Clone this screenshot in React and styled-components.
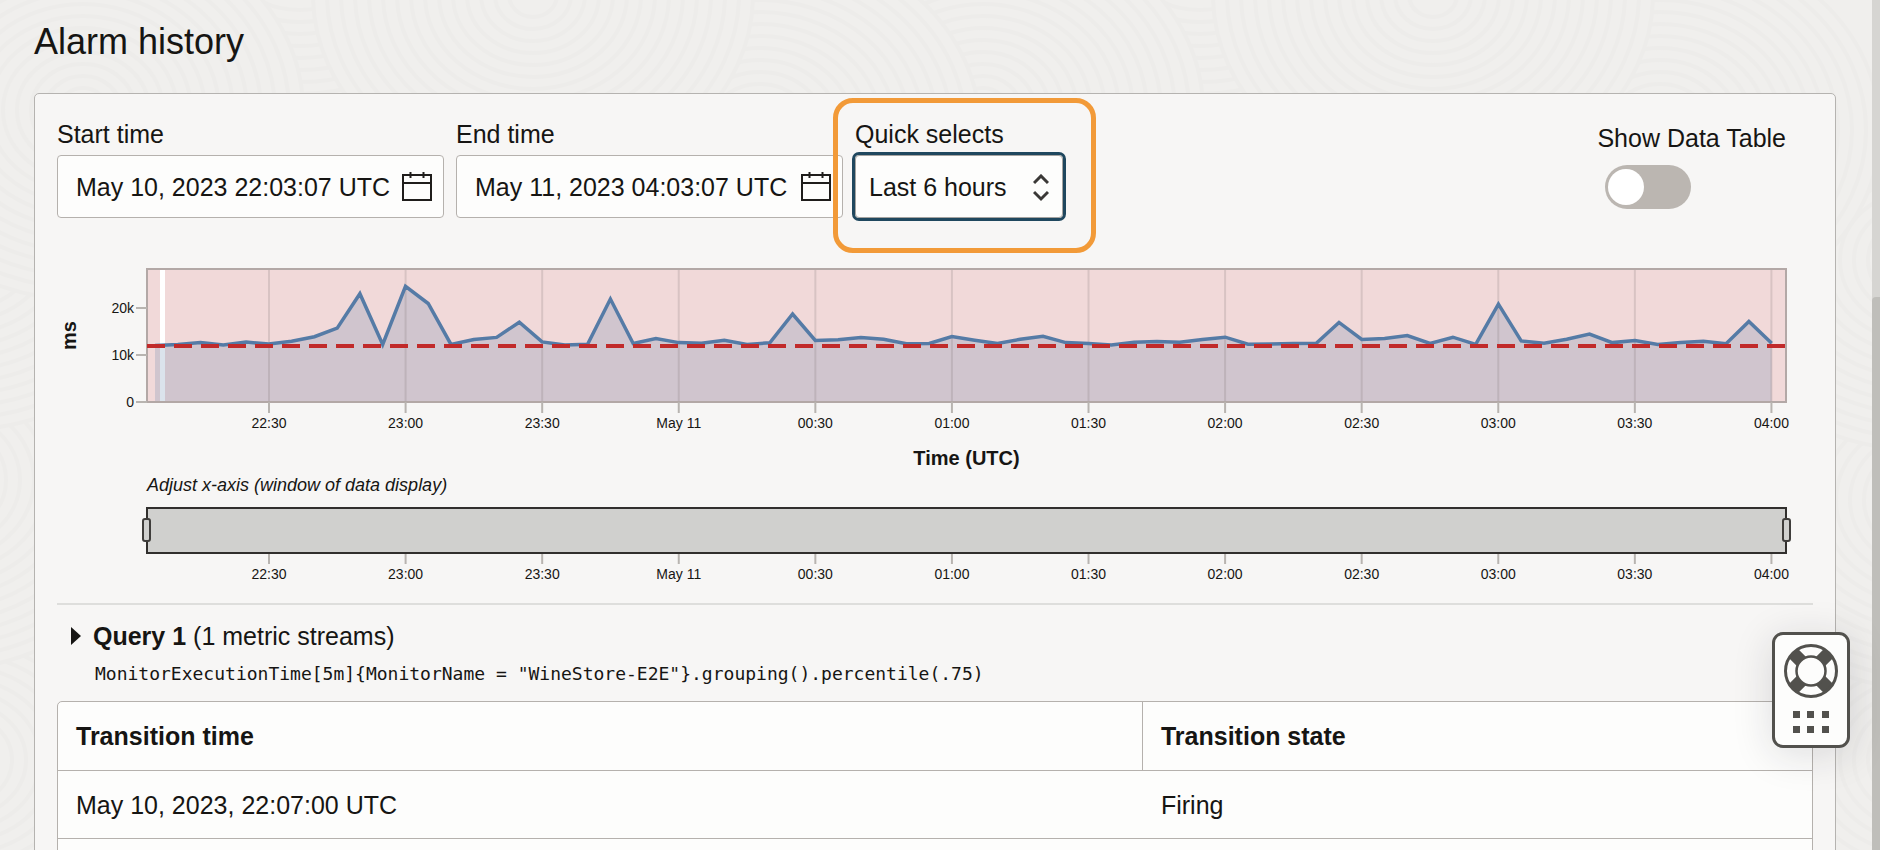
import React, { useState } from "react";
import styled, { createGlobalStyle } from "styled-components";

const GlobalStyle = createGlobalStyle`
  *, *::before, *::after { box-sizing: border-box; }
  html, body { margin: 0; height: 100%; overflow: hidden; }
  body {
    background: #f0efed;
    color: #161513;
    font-family: "Liberation Sans", Arial, Helvetica, sans-serif;
    font-size: 25px;
    line-height: 28px;
  }
  #root { height: 100%; }
  input, select, button { font: inherit; color: inherit; }
`;

const Page = styled.div`
  position: relative;
  display: flex;
  height: 100%;
  overflow: hidden;
`;

const Texture = styled.svg`
  position: absolute;
  inset: 0;
  width: 100%;
  height: 100%;
`;

const Content = styled.main`
  position: relative;
  flex: 1;
  min-width: 0;
  padding: 21px 36px 0 34px;
`;

const ScrollTrack = styled.div`
  position: relative;
  width: 8px;
  padding-top: 297px;
  background: #d6d5d2;
`;

const ScrollThumb = styled.div`
  height: 100%;
  border-radius: 4px 0 0 0;
  background: #bfbeba;
`;

const Title = styled.h1`
  margin: 0 0 30px;
  font-size: 36px;
  font-weight: 400;
  line-height: 42px;
`;

const Card = styled.section`
  padding: 26px 22px 0;
  border: 1px solid #b5b3b0;
  border-radius: 5px;
  background: #f7f6f5;
`;

const Toolbar = styled.div`
  display: flex;
  align-items: flex-start;
  gap: 12px;
  height: 149px;
`;

const Field = styled.div`
  position: relative;
  display: flex;
  flex-direction: column;
  gap: 7px;
  width: ${(p) => p.$width}px;
`;

const Label = styled.label`
  white-space: nowrap;
`;

const DateBox = styled.div`
  display: flex;
  align-items: center;
  height: 63px;
  padding: 0 11px 0 18px;
  border: 1px solid #b5b1ad;
  border-radius: 4px;
  background: #fdfdfc;
`;

const DateInput = styled.input`
  flex: 1;
  min-width: 0;
  height: 34px;
  padding: 2px 0 0;
  border: 0;
  background: transparent;
  outline: 0;
`;

const IconButton = styled.button`
  display: flex;
  margin-left: 12px;
  padding: 0;
  border: 0;
  background: none;
`;

const SelectBox = styled.div`
  position: relative;
`;

const Select = styled.select`
  display: block;
  width: 100%;
  height: 63px;
  padding: 0 40px 0 13px;
  appearance: none;
  border: 1px solid #a5a3a0;
  border-radius: 4px;
  outline: 3px solid #1f475e;
  background: #fdfdfc;
`;

const SelectArrows = styled.svg`
  position: absolute;
  top: 19px;
  right: 14px;
  pointer-events: none;
`;

const Highlight = styled.div`
  position: absolute;
  top: -22px;
  left: -22px;
  width: 263px;
  height: 155px;
  border: 5px solid #f29a38;
  border-radius: 20px;
  pointer-events: none;
`;

const ToggleField = styled.div`
  display: flex;
  flex-direction: column;
  gap: 13px;
  margin: 4px 27px 0 auto;
`;

const Toggle = styled.input`
  appearance: none;
  width: 86px;
  height: 44px;
  margin: 0 0 0 8px;
  padding: 4px 3px;
  border-radius: 22px;
  background: #bbb6b1;
  &::before {
    content: "";
    display: block;
    width: 36px;
    height: 36px;
    border-radius: 50%;
    background: #fff;
  }
  &:checked::before { margin-left: 44px; }
`;

const ChartRow = styled.div`
  display: flex;
  padding-right: 27px;
`;

const AxisSide = styled.div`
  display: flex;
  align-items: flex-start;
  width: 90px;
  height: 133px;
`;

const AxisTitle = styled.div`
  font-size: 20px;
  font-weight: 700;
  line-height: 24px;
  text-align: center;
  white-space: nowrap;
`;

const VerticalTitle = styled(AxisTitle)`
  width: 24px;
  height: 133px;
  writing-mode: vertical-rl;
  transform: rotate(180deg);
`;

const ChartBody = styled.div`
  flex: 1;
  min-width: 0;
`;

const Plot = styled.svg`
  display: block;
  width: 100%;
  height: ${(p) => p.$height}px;
  overflow: visible;
  font-size: 14px;
`;

const BrushCaption = styled.div`
  padding: 5px 0 12px;
  font-size: 18px;
  font-style: italic;
  line-height: 20px;
`;

const Brush = styled.div`
  position: relative;
  height: 47px;
  margin: 0 -1px;
  border: 2px solid #312f2d;
  background: #d0d0ce;
`;

const BrushHandle = styled.input`
  position: absolute;
  left: -6px;
  top: 9px;
  width: calc(100% + 12px);
  height: 24px;
  margin: 0;
  appearance: none;
  background: transparent;
  pointer-events: none;
  &::-webkit-slider-thumb {
    width: 9px;
    height: 24px;
    appearance: none;
    border: 2px solid #3f3d3b;
    border-radius: 3px;
    background: #d0d0ce;
    pointer-events: auto;
  }
`;

const Divider = styled.hr`
  height: 2px;
  margin: 16px 0 21px;
  border: 0;
  background: #dededc;
`;

const QueryHeader = styled.button`
  display: flex;
  align-items: center;
  gap: 12px;
  height: 20px;
  padding: 0 0 0 14px;
  border: 0;
  background: none;
  line-height: 20px;
`;

const QueryCode = styled.code`
  display: block;
  margin: 16px 0 15px 38px;
  font-family: "DejaVu Sans Mono", "Liberation Mono", monospace;
  font-size: 18px;
  line-height: 24px;
`;

const Table = styled.table`
  width: 100%;
  table-layout: fixed;
  border: 1px solid #b5b1ad;
  border-radius: 5px 5px 0 0;
  border-spacing: 0;
  background: #fdfdfc;
`;

const HeadCell = styled.th`
  width: ${(p) => p.$width};
  height: 69px;
  padding: 0 18px;
  border-bottom: 1px solid #b5b1ad;
  text-align: left;
  & + & { border-left: 1px solid #b5b1ad; }
`;

const Cell = styled.td`
  height: 68px;
  padding: 0 18px;
  border-bottom: 1px solid #b5b1ad;
  & + & { padding-left: 19px; }
`;

const HelpWidget = styled.button`
  position: absolute;
  top: 632px;
  right: 30px;
  display: flex;
  flex-direction: column;
  align-items: center;
  gap: 13px;
  width: 78px;
  height: 116px;
  padding: 9px 0 0;
  border: 3px solid #52514d;
  border-radius: 11px;
  background: #fdfdfc;
  box-shadow: 0 6px 40px rgba(30, 25, 40, 0.14);
`;

const times = ["22:30", "23:00", "23:30", "May 11", "00:30", "01:00", "01:30", "02:00", "02:30", "03:00", "03:30", "04:00"];

/* The window holds 360 minutes, from 22:03 to 04:03. */
const tickX = (i) => ((26.8 + i * 30) / 360) * 100 + "%";

/* Execution time in ms, one value for each five minutes from 22:05. */
const series = [
  12100, 12300, 12700, 12200, 12800, 12400, 13000, 13950, 15800, 23150, 12300,
  24700, 21050, 12300, 13350, 13800, 17050, 12850, 12200, 12350, 22000, 12500, 13550,
  12700, 12550, 13200, 12300, 12650, 18800, 13150, 13300, 13800, 13400, 12450, 12500,
  14000, 13200, 12500, 13400, 14050, 12700, 12500, 12150, 12750, 12900, 12750, 13350,
  13850, 12350, 12400, 12500, 12550, 17000, 13350, 13550, 14200, 12500, 13850, 12300,
  20900, 13050, 12550, 13400, 14500, 12700, 13150, 12300, 12700, 13000, 12450, 17200, 12550,
];

const points = series.map((v, i) => [8 + i * 22.77, 133 - (v / 10000) * 46.8]);
const line = points.map(([x, y]) => x.toFixed(1) + "," + y.toFixed(1)).join(" ");
const area = `${points[0][0]},133 ${line} ${points[points.length - 1][0]},133`;

function TimeAxis({ top }) {
  return times.map((t, i) => (
    <g key={t}>
      <line x1={tickX(i)} x2={tickX(i)} y1={top} y2={top + 11} stroke="#b8b4b0" strokeWidth="2" />
      <text x={tickX(i)} y={top + 26} textAnchor="middle" fill="#161513">{t}</text>
    </g>
  ));
}

function AlarmChart() {
  return (
    <Plot $height={177} role="img" aria-label="Monitor execution time">
      <rect width="100%" height="133" fill="#f1d9d9" />
      <svg width="100%" height="133" viewBox="0 0 1639 133" preserveAspectRatio="none">
        <rect x="13" width="5" height="133" fill="#fff" />
        <polygon points={area} fill="#567ba5" fillOpacity="0.21" />
      </svg>
      {times.map((t, i) => (
        <line key={t} x1={tickX(i)} x2={tickX(i)} y1="0" y2="133" stroke="#7a6e70" strokeOpacity="0.2" strokeWidth="2" />
      ))}
      <rect width="100%" height="133" fill="none" stroke="#b3a8a6" strokeWidth="2" />
      <svg width="100%" height="133" viewBox="0 0 1639 133" preserveAspectRatio="none">
        <polyline points={line} fill="none" stroke="#557ba6" strokeWidth="3.500" vectorEffect="non-scaling-stroke" />
      </svg>
      <line x1="0" x2="100%" y1="77" y2="77" stroke="#c12a2a" strokeWidth="4" strokeDasharray="18 9" />
      {[["20k", 39], ["10k", 86], ["0", 133]].map(([t, y]) => (
        <g key={t}>
          <line x1="-11" x2="0" y1={y} y2={y} stroke="#b8b4b0" strokeWidth="2" />
          <text x="-13" y={y + 5} textAnchor="end" fill="#161513">{t}</text>
        </g>
      ))}
      <TimeAxis top={133} />
    </Plot>
  );
}

function CalendarIcon() {
  return (
    <svg width="30" height="30" viewBox="0 0 30 30" fill="none" stroke="#1f1d1b" strokeWidth="2">
      <path d="M1 3h28v25H1zM1 11h28M8.500 0v6M21.500 0v6" />
    </svg>
  );
}

function LifeRing() {
  return (
    <svg width="54" height="54" viewBox="0 0 54 54" fill="none" stroke="#52514d">
      <g strokeWidth="13">
        <path d="M9.500 9.500L19 19M44.500 9.500L35 19M9.500 44.500L19 35M44.500 44.500L35 35" />
      </g>
      <circle cx="27" cy="27" r="25.500" strokeWidth="3" />
      <circle cx="27" cy="27" r="14.500" strokeWidth="2.500" fill="#fdfdfc" />
    </svg>
  );
}

function DotGrid() {
  return (
    <svg width="36" height="22" viewBox="0 0 36 22" fill="#52514d">
      {[0, 15].map((y) => [0, 14, 29].map((x) => <rect key={x + "-" + y} x={x} y={y} width="7" height="7" />))}
    </svg>
  );
}

const rings = [
  [300, -60], [1200, -60], [-40, 760], [-60, 480], [-40, 240], [1920, 760], [1930, 500], [1920, 260],
  [83, 110], [983, 110], [760, 130], [1660, 130], [533, -5], [1433, -5],
];

function Background() {
  return (
    <Texture aria-hidden="true" fill="#f0efed" stroke="#edecea" strokeWidth="4">
      {rings.map(([cx, cy]) => (
        <g key={cx + "-" + cy}>
          {Array.from({ length: 15 }, (_, i) => (
            <ellipse key={i} cx={cx} cy={cy} rx={220 - i * 14} ry={190 - i * 12} />
          ))}
        </g>
      ))}
    </Texture>
  );
}

function DateField({ id, label, value }) {
  return (
    <Field $width={387}>
      <Label htmlFor={id}>{label}</Label>
      <DateBox>
        <DateInput id={id} type="text" defaultValue={value} />
        <IconButton type="button" aria-label={"Choose " + label.toLowerCase()}>
          <CalendarIcon />
        </IconButton>
      </DateBox>
    </Field>
  );
}

export default function App() {
  const [showTable, setShowTable] = useState(false);
  return (
    <Page>
      <GlobalStyle />
      <Background />
      <Content>
        <Title>Alarm history</Title>
        <Card>
          <Toolbar>
            <DateField id="start" label="Start time" value="May 10, 2023 22:03:07 UTC" />
            <DateField id="end" label="End time" value="May 11, 2023 04:03:07 UTC" />
            <Field $width={208}>
              <Label htmlFor="quick">Quick selects</Label>
              <SelectBox>
                <Select id="quick" defaultValue="6h">
                  <option value="6h">Last 6 hours</option>
                </Select>
                <SelectArrows width="16" height="28" viewBox="0 0 16 28" fill="none" stroke="#3a3836" strokeWidth="3">
                  <path d="M1 9l7-7 7 7M1 18l7 7 7-7" />
                </SelectArrows>
              </SelectBox>
              <Highlight />
            </Field>
            <ToggleField>
              <Label htmlFor="show-table">Show Data Table</Label>
              <Toggle
                id="show-table"
                type="checkbox"
                role="switch"
                checked={showTable}
                onChange={(e) => setShowTable(e.target.checked)}
              />
            </ToggleField>
          </Toolbar>

          <ChartRow>
            <AxisSide>
              <VerticalTitle>ms</VerticalTitle>
            </AxisSide>
            <ChartBody>
              <AlarmChart />
              <AxisTitle>Time (UTC)</AxisTitle>
              <BrushCaption>Adjust x-axis (window of data display)</BrushCaption>
              <Brush>
                <BrushHandle type="range" min="0" max="360" defaultValue="0" aria-label="Window start" />
                <BrushHandle type="range" min="0" max="360" defaultValue="360" aria-label="Window end" />
              </Brush>
              <Plot $height={33} role="img" aria-label="Window time axis">
                <TimeAxis top={-1} />
              </Plot>
            </ChartBody>
          </ChartRow>

          <Divider />
          <QueryHeader type="button" aria-expanded="false">
            <svg width="10" height="18" viewBox="0 0 10 18" fill="#161513">
              <path d="M0 0l10 9-10 9z" />
            </svg>
            <span><b>Query 1</b> (1 metric streams)</span>
          </QueryHeader>
          <QueryCode>{'MonitorExecutionTime[5m]{MonitorName = "WineStore-E2E"}.grouping().percentile(.75)'}</QueryCode>

          <Table>
            <thead>
              <tr>
                <HeadCell $width="61.8%">Transition time</HeadCell>
                <HeadCell>Transition state</HeadCell>
              </tr>
            </thead>
            <tbody>
              <tr>
                <Cell>May 10, 2023, 22:07:00 UTC</Cell>
                <Cell>Firing</Cell>
              </tr>
              <tr>
                <Cell />
                <Cell />
              </tr>
            </tbody>
          </Table>
        </Card>
      </Content>
      <ScrollTrack>
        <ScrollThumb />
      </ScrollTrack>
      <HelpWidget type="button" aria-label="Help">
        <LifeRing />
        <DotGrid />
      </HelpWidget>
    </Page>
  );
}
